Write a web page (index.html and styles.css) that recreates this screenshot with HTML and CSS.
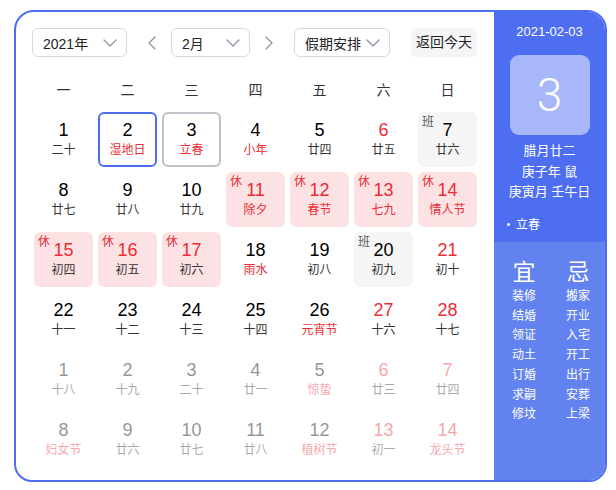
FILE: index.html
```html
<!DOCTYPE html>
<html lang="zh-CN">
<head>
<meta charset="utf-8">
<title>万年历</title>
<link rel="stylesheet" href="styles.css">
</head>
<body>
<div class="cal">
  <div class="main">
    <div class="controls">
      <div class="select sel-year"><span>2021年</span><svg class="chev" width="14" height="8" viewBox="0 0 14 8"><polyline points="1,1 7,7 13,1"/></svg></div>
      <svg class="arrow arrow-l" width="8" height="14" viewBox="0 0 8 14"><polyline points="7,1 1,7 7,13"/></svg>
      <div class="select sel-month"><span>2月</span><svg class="chev" width="14" height="8" viewBox="0 0 14 8"><polyline points="1,1 7,7 13,1"/></svg></div>
      <svg class="arrow arrow-r" width="8" height="14" viewBox="0 0 8 14"><polyline points="1,1 7,7 1,13"/></svg>
      <div class="select sel-holiday"><span>假期安排</span><svg class="chev" width="14" height="8" viewBox="0 0 14 8"><polyline points="1,1 7,7 13,1"/></svg></div>
      <div class="today-btn">返回今天</div>
    </div>
    <div class="weekdays">
      <div>一</div><div>二</div><div>三</div><div>四</div><div>五</div><div>六</div><div>日</div>
    </div>
    <div class="grid">
      <div class="cell"><div class="num">1</div><div class="lunar">二十</div></div>
      <div class="cell selected"><div class="num">2</div><div class="lunar red">湿地日</div></div>
      <div class="cell today"><div class="num">3</div><div class="lunar red">立春</div></div>
      <div class="cell"><div class="num">4</div><div class="lunar red">小年</div></div>
      <div class="cell"><div class="num">5</div><div class="lunar">廿四</div></div>
      <div class="cell"><div class="num red">6</div><div class="lunar">廿五</div></div>
      <div class="cell work"><span class="tag">班</span><div class="num">7</div><div class="lunar">廿六</div></div>

      <div class="cell"><div class="num">8</div><div class="lunar">廿七</div></div>
      <div class="cell"><div class="num">9</div><div class="lunar">廿八</div></div>
      <div class="cell"><div class="num">10</div><div class="lunar">廿九</div></div>
      <div class="cell rest"><span class="tag">休</span><div class="num red">11</div><div class="lunar red">除夕</div></div>
      <div class="cell rest"><span class="tag">休</span><div class="num red">12</div><div class="lunar red">春节</div></div>
      <div class="cell rest"><span class="tag">休</span><div class="num red">13</div><div class="lunar red">七九</div></div>
      <div class="cell rest"><span class="tag">休</span><div class="num red">14</div><div class="lunar red">情人节</div></div>

      <div class="cell rest"><span class="tag">休</span><div class="num red">15</div><div class="lunar">初四</div></div>
      <div class="cell rest"><span class="tag">休</span><div class="num red">16</div><div class="lunar">初五</div></div>
      <div class="cell rest"><span class="tag">休</span><div class="num red">17</div><div class="lunar">初六</div></div>
      <div class="cell"><div class="num">18</div><div class="lunar red">雨水</div></div>
      <div class="cell"><div class="num">19</div><div class="lunar">初八</div></div>
      <div class="cell work"><span class="tag">班</span><div class="num">20</div><div class="lunar">初九</div></div>
      <div class="cell"><div class="num red">21</div><div class="lunar">初十</div></div>

      <div class="cell"><div class="num">22</div><div class="lunar">十一</div></div>
      <div class="cell"><div class="num">23</div><div class="lunar">十二</div></div>
      <div class="cell"><div class="num">24</div><div class="lunar">十三</div></div>
      <div class="cell"><div class="num">25</div><div class="lunar">十四</div></div>
      <div class="cell"><div class="num">26</div><div class="lunar red">元宵节</div></div>
      <div class="cell"><div class="num red">27</div><div class="lunar">十六</div></div>
      <div class="cell"><div class="num red">28</div><div class="lunar">十七</div></div>

      <div class="cell other"><div class="num">1</div><div class="lunar">十八</div></div>
      <div class="cell other"><div class="num">2</div><div class="lunar">十九</div></div>
      <div class="cell other"><div class="num">3</div><div class="lunar">二十</div></div>
      <div class="cell other"><div class="num">4</div><div class="lunar">廿一</div></div>
      <div class="cell other"><div class="num">5</div><div class="lunar red">惊蛰</div></div>
      <div class="cell other"><div class="num red">6</div><div class="lunar">廿三</div></div>
      <div class="cell other"><div class="num red">7</div><div class="lunar">廿四</div></div>

      <div class="cell other"><div class="num">8</div><div class="lunar red">妇女节</div></div>
      <div class="cell other"><div class="num">9</div><div class="lunar">廿六</div></div>
      <div class="cell other"><div class="num">10</div><div class="lunar">廿七</div></div>
      <div class="cell other"><div class="num">11</div><div class="lunar">廿八</div></div>
      <div class="cell other"><div class="num">12</div><div class="lunar red">植树节</div></div>
      <div class="cell other"><div class="num red">13</div><div class="lunar">初一</div></div>
      <div class="cell other"><div class="num red">14</div><div class="lunar red">龙头节</div></div>
    </div>
  </div>
  <div class="side">
    <div class="side-top">
      <div class="side-date">2021-02-03</div>
      <div class="big-day">3</div>
      <div class="lunar-info">
        <div>腊月廿二</div>
        <div>庚子年 鼠</div>
        <div>庚寅月 壬午日</div>
      </div>
      <div class="term"><span class="dot"></span>立春</div>
    </div>
    <div class="side-bottom">
      <div class="yj-col">
        <div class="yj-head">宜</div>
        <div class="yj-list">
          <div>装修</div><div>结婚</div><div>领证</div><div>动土</div><div>订婚</div><div>求嗣</div><div>修坟</div>
        </div>
      </div>
      <div class="yj-col">
        <div class="yj-head">忌</div>
        <div class="yj-list">
          <div>搬家</div><div>开业</div><div>入宅</div><div>开工</div><div>出行</div><div>安葬</div><div>上梁</div>
        </div>
      </div>
    </div>
  </div>
</div>
</body>
</html>
```
FILE: styles.css
```css
html, body {
  margin: 0;
  padding: 0;
  background: #fff;
}
body {
  font-family: "Liberation Sans", Arial, "Noto Sans CJK SC", sans-serif;
  color: #333;
}
.cal {
  margin: 10px 0 0 14px;
  width: 593px;
  height: 472px;
  box-sizing: border-box;
  border: 2px solid #4e6ef2;
  border-radius: 20px 20px 18px 18px;
  display: flex;
  overflow: hidden;
  background: #fff;
}
.main {
  width: 478px;
  box-sizing: border-box;
  padding: 16px 14px 0 16px;
}
.controls {
  display: flex;
  align-items: center;
  height: 29px;
}
.select {
  box-sizing: border-box;
  height: 29px;
  border: 1px solid #d7d9e0;
  border-radius: 6px;
  display: flex;
  align-items: center;
  justify-content: space-between;
  padding: 0 9px 0 10px;
  font-size: 14px;
  color: #222;
}
.sel-year { width: 95px; }
.sel-month { width: 79px; }
.sel-holiday { width: 96px; }
.chev polyline, .arrow polyline {
  fill: none;
  stroke: #9195a3;
  stroke-width: 1.4;
  stroke-linecap: round;
  stroke-linejoin: round;
}
.arrow { display: block; flex: none; }
.arrow-l { margin: 0 15px 0 21px; }
.arrow-r { margin: 0 21px 0 15px; }
.today-btn {
  margin-left: 21px;
  width: 66px;
  height: 29px;
  line-height: 29px;
  text-align: center;
  background: #f5f5f6;
  border-radius: 6px;
  font-size: 14px;
  color: #222;
}
.weekdays {
  margin: 13px 0 0 2px;
  height: 40px;
  display: grid;
  grid-template-columns: repeat(7, 59px);
  column-gap: 5px;
  font-size: 14px;
  line-height: 40px;
  text-align: center;
  color: #333;
}
.grid {
  margin: 2px 0 0 2px;
  display: grid;
  grid-template-columns: repeat(7, 59px);
  grid-auto-rows: 55px;
  gap: 5px;
}
.cell {
  position: relative;
  box-sizing: border-box;
  border-radius: 6px;
  padding-top: 7px;
  text-align: center;
}
.num {
  font-size: 18px;
  line-height: 22px;
  color: #000;
}
.lunar {
  font-size: 12px;
  line-height: 18px;
  color: #333;
}
.num.red, .lunar.red { color: #ec2c35; }
.cell.selected {
  border: 2px solid #4e6ef2;
  padding-top: 5px;
}
.cell.today {
  border: 2px solid #bfc1c8;
  padding-top: 5px;
}
.cell.rest { background: #fde2e3; }
.cell.work { background: #f5f5f6; }
.tag {
  position: absolute;
  left: 4px;
  top: 2px;
  font-size: 12px;
  line-height: 16px;
}
.rest .tag { color: #ec2c35; }
.work .tag { color: #555; }
.cell.other { opacity: 0.42; }

.side {
  width: 111px;
  display: flex;
  flex-direction: column;
  color: #fff;
}
.side-top {
  height: 230px;
  background: #4e6ef2;
  text-align: center;
  padding-top: 12px;
  box-sizing: border-box;
}
.side-date {
  font-size: 13px;
  line-height: 16px;
}
.big-day {
  width: 80px;
  height: 80px;
  margin: 15px auto 0;
  border-radius: 9px;
  background: rgba(255, 255, 255, 0.5);
  font-family: Roboto, "Liberation Sans", sans-serif;
  font-weight: 300;
  font-size: 46px;
  line-height: 80px;
}
.lunar-info {
  margin-top: 6px;
  font-size: 13px;
  line-height: 20.5px;
}
.term {
  margin-top: 13px;
  text-align: left;
  padding-left: 13px;
  font-size: 12px;
  line-height: 18px;
  display: flex;
  align-items: center;
}
.dot {
  width: 3px;
  height: 3px;
  border-radius: 50%;
  background: #fff;
  margin-right: 6px;
}
.side-bottom {
  flex: 1;
  background: #6282f0;
  display: flex;
  padding: 17px 0 0 18px;
  gap: 30px;
}
.yj-col {
  width: 24px;
  text-align: center;
}
.yj-head {
  font-size: 23px;
  line-height: 26px;
  white-space: nowrap;
}
.yj-list {
  margin-top: 2px;
  font-size: 12px;
  line-height: 19.7px;
  white-space: nowrap;
}
```
